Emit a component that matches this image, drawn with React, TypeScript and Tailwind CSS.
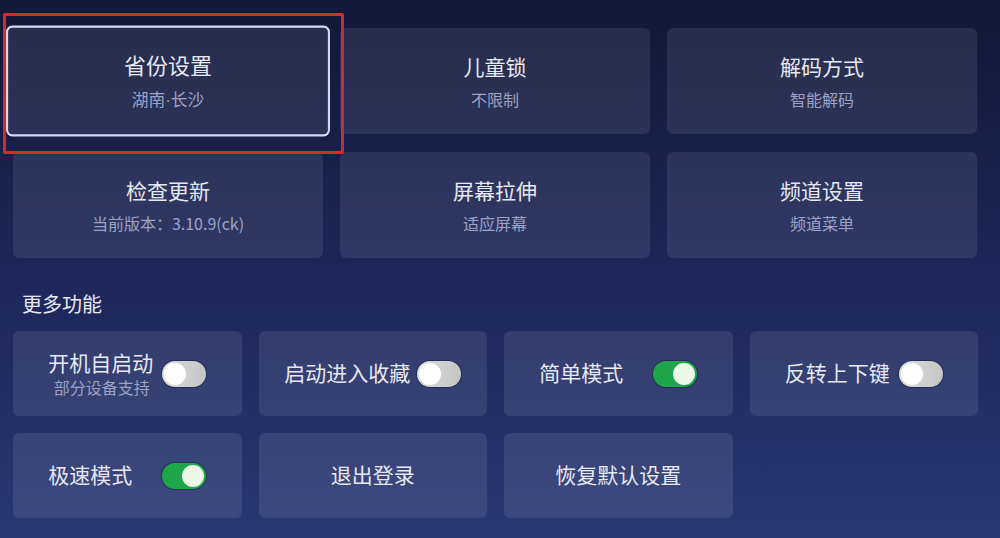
const FONT = { fontFamily: '"Noto Sans CJK SC", "Noto Sans", sans-serif' };

type Tile = { title: string; sub: React.ReactNode; focused?: boolean };

const TILES: Tile[] = [
  {
    title: "省份设置",
    sub: (
      <>
        湖南<span style={{ fontFamily: '"Liberation Sans", sans-serif' }}>·</span>长沙
      </>
    ),
    focused: true,
  },
  { title: "儿童锁", sub: "不限制" },
  { title: "解码方式", sub: "智能解码" },
  { title: "检查更新", sub: "当前版本：3.10.9(ck)" },
  { title: "屏幕拉伸", sub: "适应屏幕" },
  { title: "频道设置", sub: "频道菜单" },
];

type Extra = { title: string; sub?: string; toggle?: boolean };

const EXTRAS: Extra[] = [
  { title: "开机自启动", sub: "部分设备支持", toggle: false },
  { title: "启动进入收藏", toggle: false },
  { title: "简单模式", toggle: true },
  { title: "反转上下键", toggle: false },
  { title: "极速模式", toggle: true },
  { title: "退出登录" },
  { title: "恢复默认设置" },
];

function Toggle({ on }: { on: boolean }) {
  return (
    <div
      className={`flex h-[26px] w-[44px] items-center rounded-full px-[2px] shadow-[0_0_0_1px_rgba(20,30,60,0.5)] ${
        on ? "justify-end bg-[#1fa64a]" : "justify-start bg-linear-to-r from-[#dedede] to-[#c4c4c4]"
      }`}
    >
      <div className={`h-[22px] w-[22px] rounded-full ${on ? "bg-[#eef8e8]" : "bg-white"}`} />
    </div>
  );
}

export default function App() {
  return (
    <div
      className="relative h-[538px] w-[1000px] overflow-hidden bg-linear-to-b from-[#121838] via-[#1d2559] to-[#2a3874]"
      style={FONT}
    >
      <div className="ml-[13px] grid w-[964px] grid-cols-3 gap-x-[17px] gap-y-[18px] pt-[28px]">
        {TILES.map((t) => (
          <div
            key={t.title}
            className={`flex h-[106px] flex-col items-center justify-center rounded-[6px] bg-white/[0.09] ${
              t.focused ? "scale-[1.045] border-2 border-[#d6daf4] bg-[#2f3668]" : ""
            }`}
          >
            <div className="text-[21px] leading-[28px] text-[#e6e8f2]">{t.title}</div>
            <div className="mt-[8px] text-[16px] leading-[22px] text-[#9ca2c6]">{t.sub}</div>
          </div>
        ))}
      </div>

      <div className="ml-[22px] mt-[36px] text-[20px] leading-[20px] text-[#e6e8f2]">更多功能</div>

      <div className="ml-[13px] mt-[17px] grid w-[965px] grid-cols-4 gap-x-[17px] gap-y-[17px]">
        {EXTRAS.map((e) => (
          <div
            key={e.title}
            className="flex h-[85px] items-center justify-center gap-[7px] rounded-[6px] bg-white/[0.09]"
          >
            {e.toggle === undefined ? (
              <div className="mt-[-3px] text-[21px] leading-[28px] text-[#e6e8f2]">{e.title}</div>
            ) : (
              <>
                <div className={`flex flex-col items-center ${e.sub ? "" : "mt-[-3px]"}`}>
                  <div className="min-w-[107px] text-left text-[21px] leading-[26px] text-[#e6e8f2]">{e.title}</div>
                  {e.sub && <div className="text-[16px] leading-[24px] text-[#9ca2c6]">{e.sub}</div>}
                </div>
                <Toggle on={e.toggle} />
              </>
            )}
          </div>
        ))}
      </div>

      <div className="absolute left-[3px] top-[13px] h-[141px] w-[341px] rounded-[2px] border-[3px] border-[#d42a2a]" />
    </div>
  );
}
